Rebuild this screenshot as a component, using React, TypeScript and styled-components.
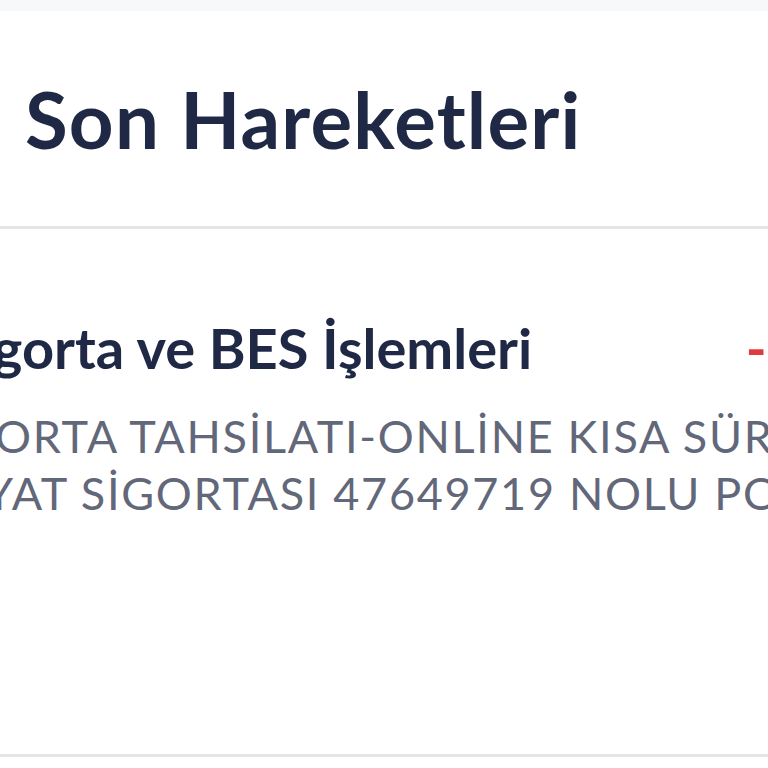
import React from "react";
import styled, { createGlobalStyle } from "styled-components";

const Global = createGlobalStyle`
  html, body { margin: 0; padding: 0; background: #ffffff; }
  body { font-family: "Lato", "Noto Sans", sans-serif; }
`;

const Page = styled.div`
  width: 768px;
  height: 768px;
  overflow: hidden;
  display: flex;
  flex-direction: column;
  background: #ffffff;
`;

const TopBand = styled.div`
  height: 11px;
  background: #f7f8fa;
  flex: none;
`;

const Header = styled.div`
  height: 215px;
  display: flex;
  align-items: center;
  padding-left: 25px;
  flex: none;
`;

const Title = styled.h1`
  margin: 0;
  font-family: "Lato", sans-serif;
  font-weight: 700;
  font-size: 78px;
  color: #1f2945;
  letter-spacing: 1.2px;
  white-space: nowrap;
`;

const Divider = styled.div`
  height: 3px;
  background: #e2e4e8;
  flex: none;
`;

const Row = styled.div`
  height: 525px;
  overflow: hidden;
  flex: none;
  display: flex;
  flex-direction: column;
  padding-top: 85px;
  box-sizing: border-box;
`;

const TopLine = styled.div`
  display: flex;
  justify-content: space-between;
  align-items: center;
  white-space: nowrap;
`;

const RowTitle = styled.div`
  margin-left: -52px;
  font-weight: 700;
  font-size: 56px;
  color: #1f2945;
`;

const Amount = styled.div`
  margin-right: -31px;
  font-weight: 700;
  font-size: 56px;
  color: #e03a3e;
`;

const Desc = styled.div`
  margin-top: 27px;
  margin-left: -80px;
  font-size: 45px;
  line-height: 57px;
  letter-spacing: 1.7px;
  color: #626879;
  white-space: nowrap;
`;

const DescLine = styled.div``;

export default function App() {
  return (
    <>
      <Global />
      <Page>
        <TopBand />
        <Header>
          <Title>Son Hareketleri</Title>
        </Header>
        <Divider />
        <Row>
          <TopLine>
            <RowTitle>Sigorta ve BES İşlemleri</RowTitle>
            <Amount>-1</Amount>
          </TopLine>
          <Desc>
            <DescLine>SİGORTA TAHSİLATI-ONLİNE KISA SÜRELİ</DescLine>
            <DescLine>HAYAT SİGORTASI 47649719 NOLU POLİÇE</DescLine>
          </Desc>
        </Row>
        <Divider />
      </Page>
    </>
  );
}
